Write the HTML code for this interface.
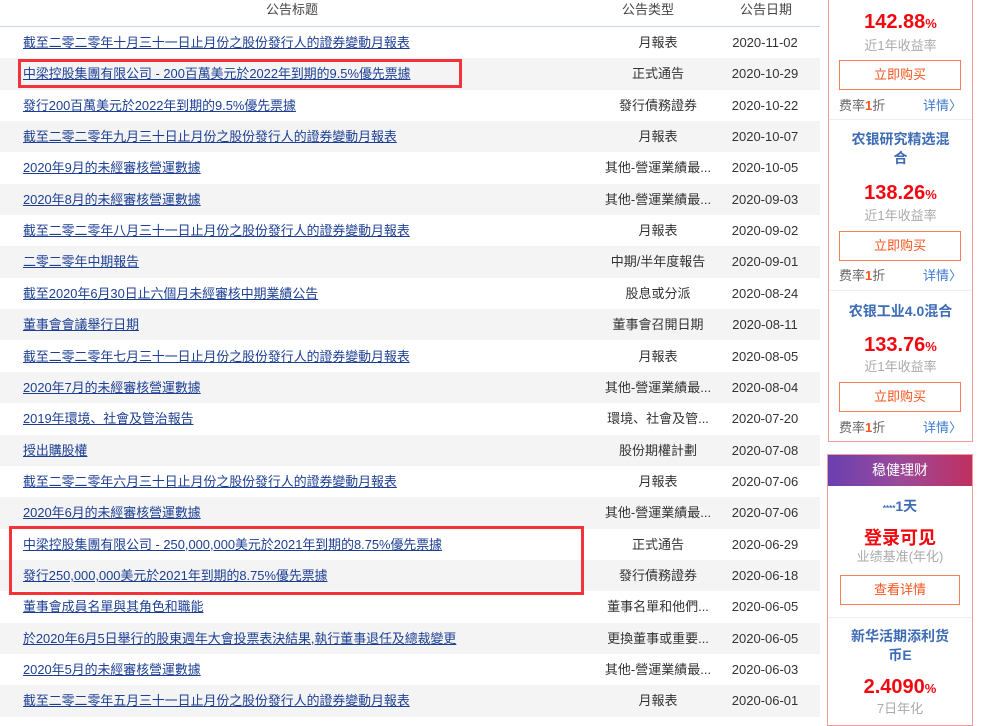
<!DOCTYPE html>
<html><head><meta charset="utf-8"><style>
*{margin:0;padding:0;box-sizing:border-box}
body{width:1000px;height:724px;overflow:hidden;background:#fff;font-family:"Liberation Sans","Noto Sans CJK SC",sans-serif;font-size:13px;color:#333;position:relative}
.hd{position:absolute;top:0;left:0;width:820px;height:27px;border-bottom:1px solid #c6d9ea}
.hd span{position:absolute;top:-1px;font-size:13px;color:#444}
.r{position:absolute;left:0;width:820px;height:31.35px;line-height:31px}
.g{background:#f4f4f4}
.r a{position:absolute;left:23px;color:#1c3f94;text-decoration:underline;white-space:nowrap;font-size:12.9px}
.r .t{position:absolute;left:598px;width:120px;text-align:center;color:#333;white-space:nowrap}
.r .d{position:absolute;left:725px;width:80px;text-align:center;color:#333}
.hl{position:absolute;border:3px solid #f2333a}
.box{position:absolute;border:1px solid #f59a9a;background:#fff}
.c{position:absolute;left:0;width:100%;text-align:center}
.big{color:#f2090f;font-weight:bold;font-size:20px}
.big small{font-size:13px}
.sub{color:#aaa;font-size:13px}
.btn{position:absolute;left:10px;width:122px;height:30px;border:1px solid #f97b57;color:#f7541e;text-align:center;line-height:28px;font-size:13px}
.fee{position:absolute;left:10px;color:#666;font-size:13px}
.fee b{color:#f7541e}
.det{position:absolute;right:10px;color:#3d7bd0;font-size:13px}
.sep{position:absolute;left:0;width:100%;border-top:1px solid #eee}
.nm{color:#3d6cb5;font-weight:bold;font-size:14px;line-height:19px}
</style></head><body>
<div class="hd"><span style="left:266px">公告标题</span><span style="left:622px">公告类型</span><span style="left:740px">公告日期</span></div>

<div class="r" style="top:27px"><a>截至二零二零年十月三十一日止月份之股份發行人的證券變動月報表</a><span class="t">月報表</span><span class="d">2020-11-02</span></div>
<div class="r g" style="top:58.35px"><a>中梁控股集團有限公司 - 200百萬美元於2022年到期的9.5%優先票據</a><span class="t">正式通告</span><span class="d">2020-10-29</span></div>
<div class="r" style="top:89.7px"><a>發行200百萬美元於2022年到期的9.5%優先票據</a><span class="t">發行債務證券</span><span class="d">2020-10-22</span></div>
<div class="r g" style="top:121.05px"><a>截至二零二零年九月三十日止月份之股份發行人的證券變動月報表</a><span class="t">月報表</span><span class="d">2020-10-07</span></div>
<div class="r" style="top:152.4px"><a>2020年9月的未經審核營運數據</a><span class="t">其他-營運業績最...</span><span class="d">2020-10-05</span></div>
<div class="r g" style="top:183.75px"><a>2020年8月的未經審核營運數據</a><span class="t">其他-營運業績最...</span><span class="d">2020-09-03</span></div>
<div class="r" style="top:215.1px"><a>截至二零二零年八月三十一日止月份之股份發行人的證券變動月報表</a><span class="t">月報表</span><span class="d">2020-09-02</span></div>
<div class="r g" style="top:246.45px"><a>二零二零年中期報告</a><span class="t">中期/半年度報告</span><span class="d">2020-09-01</span></div>
<div class="r" style="top:277.8px"><a>截至2020年6月30日止六個月未經審核中期業績公告</a><span class="t">股息或分派</span><span class="d">2020-08-24</span></div>
<div class="r g" style="top:309.15px"><a>董事會會議舉行日期</a><span class="t">董事會召開日期</span><span class="d">2020-08-11</span></div>
<div class="r" style="top:340.5px"><a>截至二零二零年七月三十一日止月份之股份發行人的證券變動月報表</a><span class="t">月報表</span><span class="d">2020-08-05</span></div>
<div class="r g" style="top:371.85px"><a>2020年7月的未經審核營運數據</a><span class="t">其他-營運業績最...</span><span class="d">2020-08-04</span></div>
<div class="r" style="top:403.2px"><a>2019年環境、社會及管治報告</a><span class="t">環境、社會及管...</span><span class="d">2020-07-20</span></div>
<div class="r g" style="top:434.55px"><a>授出購股權</a><span class="t">股份期權計劃</span><span class="d">2020-07-08</span></div>
<div class="r" style="top:465.9px"><a>截至二零二零年六月三十日止月份之股份發行人的證券變動月報表</a><span class="t">月報表</span><span class="d">2020-07-06</span></div>
<div class="r g" style="top:497.25px"><a>2020年6月的未經審核營運數據</a><span class="t">其他-營運業績最...</span><span class="d">2020-07-06</span></div>
<div class="r" style="top:528.6px"><a>中梁控股集團有限公司 - 250,000,000美元於2021年到期的8.75%優先票據</a><span class="t">正式通告</span><span class="d">2020-06-29</span></div>
<div class="r g" style="top:559.95px"><a>發行250,000,000美元於2021年到期的8.75%優先票據</a><span class="t">發行債務證券</span><span class="d">2020-06-18</span></div>
<div class="r" style="top:591.3px"><a>董事會成員名單與其角色和職能</a><span class="t">董事名單和他們...</span><span class="d">2020-06-05</span></div>
<div class="r g" style="top:622.65px"><a>於2020年6月5日舉行的股東週年大會投票表決結果,執行董事退任及總裁變更</a><span class="t">更換董事或重要...</span><span class="d">2020-06-05</span></div>
<div class="r" style="top:654px"><a>2020年5月的未經審核營運數據</a><span class="t">其他-營運業績最...</span><span class="d">2020-06-03</span></div>
<div class="r g" style="top:685.35px"><a>截至二零二零年五月三十一日止月份之股份發行人的證券變動月報表</a><span class="t">月報表</span><span class="d">2020-06-01</span></div>

<div class="hl" style="left:18px;top:59px;width:444px;height:29px"></div>
<div class="hl" style="left:9px;top:526px;width:575px;height:69px"></div>

<div class="box" style="left:828px;top:-2px;width:145px;height:444px">
 <div class="c big" style="top:12px">142.88<small>%</small></div>
 <div class="c sub" style="top:36px">近1年收益率</div>
 <div class="btn" style="top:61px">立即购买</div>
 <div class="fee" style="top:96px">费率<b>1</b>折</div><div class="det" style="top:96px">详情〉</div>
 <div class="sep" style="top:120px"></div>
 <div class="c nm" style="top:131px">农银研究精选混<br>合</div>
 <div class="c big" style="top:183px">138.26<small>%</small></div>
 <div class="c sub" style="top:206px">近1年收益率</div>
 <div class="btn" style="top:232px">立即购买</div>
 <div class="fee" style="top:266px">费率<b>1</b>折</div><div class="det" style="top:266px">详情〉</div>
 <div class="sep" style="top:291px"></div>
 <div class="c nm" style="top:303px">农银工业4.0混合</div>
 <div class="c big" style="top:335px">133.76<small>%</small></div>
 <div class="c sub" style="top:357px">近1年收益率</div>
 <div class="btn" style="top:383px">立即购买</div>
 <div class="fee" style="top:418px">费率<b>1</b>折</div><div class="det" style="top:418px">详情〉</div>
</div>

<div class="box" style="left:827px;top:454px;width:146px;height:272px">
 <div style="position:absolute;left:0;top:0;width:100%;height:31px;background:linear-gradient(90deg,#6a3fb0,#9a4a9a 50%,#c03060);color:#fff;text-align:center;line-height:30px;font-size:14px">稳健理财</div>
 <div class="c" style="top:41px;color:#3d6cb5;font-size:14px;font-weight:bold"><span style="font-size:8px">****</span>1天</div>
 <div class="c" style="top:69px;color:#f2090f;font-size:18px;font-weight:bold">登录可见</div>
 <div class="c sub" style="top:91px">业绩基准(年化)</div>
 <div class="btn" style="top:120px;width:120px;left:12px">查看详情</div>
 <div class="sep" style="top:162px"></div>
 <div class="c nm" style="top:172px">新华活期添利货<br>币E</div>
 <div class="c big" style="top:221px">2.4090<small>%</small></div>
 <div class="c sub" style="top:243px">7日年化</div>
</div>
</body></html>
